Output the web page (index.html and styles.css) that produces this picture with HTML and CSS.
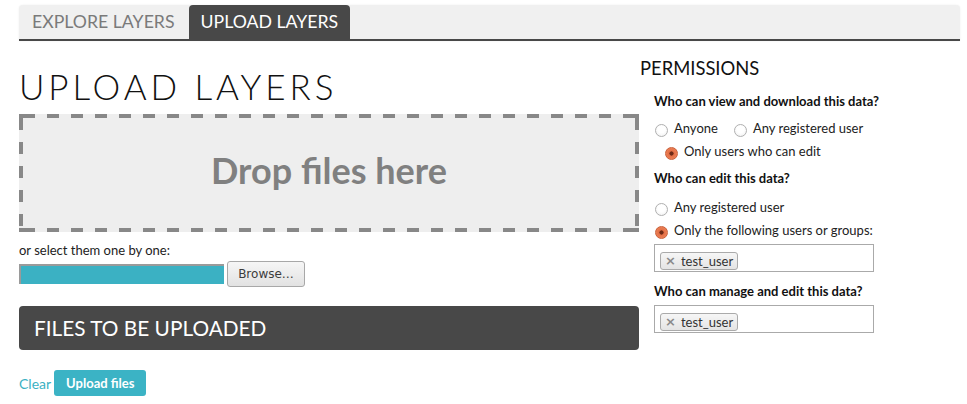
FILE: index.html
```html
<!DOCTYPE html>
<html lang="en">
<head>
<meta charset="utf-8">
<title>Upload Layers</title>
<link rel="stylesheet" href="styles.css">
</head>
<body>
<div class="page">
  <nav class="tabs">
    <a class="tab">Explore Layers</a>
    <a class="tab active">Upload Layers</a>
  </nav>
  <div class="main">
    <section class="left">
      <h1 class="title">Upload Layers</h1>
      <div class="drop">Drop files here</div>
      <p class="hint">or select them one by one:</p>
      <div class="file-row">
        <span class="file-field"></span>
        <button class="browse">Browse…</button>
      </div>
      <div class="files-bar">Files to be uploaded</div>
      <div class="actions">
        <a class="clear">Clear</a>
        <button class="upload">Upload files</button>
      </div>
    </section>
    <aside class="right">
      <h2 class="perm-title">Permissions</h2>
      <div class="perm">
        <h3 class="q q-first">Who can view and download this data?</h3>
        <div class="row row-a">
          <label class="opt"><span class="radio"></span>Anyone</label>
          <label class="opt opt-gap"><span class="radio"></span>Any registered user</label>
        </div>
        <div class="row row-b indent">
          <label class="opt"><span class="radio on"></span>Only users who can edit</label>
        </div>
        <h3 class="q q-mid">Who can edit this data?</h3>
        <div class="row row-c">
          <label class="opt"><span class="radio"></span>Any registered user</label>
        </div>
        <div class="row row-b">
          <label class="opt"><span class="radio on"></span>Only the following users or groups:</label>
        </div>
        <div class="tagbox box-1"><span class="chip"><span class="x">×</span>test_user</span></div>
        <h3 class="q q-last">Who can manage and edit this data?</h3>
        <div class="tagbox box-2"><span class="chip"><span class="x">×</span>test_user</span></div>
      </div>
    </aside>
  </div>
</div>
</body>
</html>
```
FILE: styles.css
```css
* { box-sizing: border-box; }
html, body { margin: 0; padding: 0; background: #fff; }
body { font-family: Lato, "Open Sans", sans-serif; color: #222; }
.page { padding: 5px 7px 0 19px; }

.tabs {
  display: flex;
  height: 36px;
  background: #f0f0f0;
  border-bottom: 2px solid #484848;
  border-radius: 4px 4px 0 0;
  box-shadow: 0 0 2px rgba(0,0,0,0.08);
}
.tab {
  height: 34px;
  line-height: 34px;
  padding: 0 14px 0 13px;
  font-size: 17.7px;
  text-transform: uppercase;
  color: #7a7a7a;
  border-radius: 4px 4px 0 0;
}
.tab.active { background: #484848; color: #fff; padding: 0 12px; }

.main { display: grid; grid-template-columns: 620px 1fr; }

.title {
  margin: 25px 0 8px 0;
  font-size: 35px;
  line-height: 40px;
  font-weight: 300;
  letter-spacing: 3.9px;
  text-transform: uppercase;
  color: #111;
}
.drop {
  height: 118px;
  background-color: #eeeeee;
  background-image:
    linear-gradient(#888, #888), linear-gradient(#888, #888),
    linear-gradient(#888, #888), linear-gradient(#888, #888),
    repeating-linear-gradient(90deg, transparent 0 4px, #888 4px 16px, transparent 16px 24px),
    repeating-linear-gradient(90deg, transparent 0 4px, #888 4px 16px, transparent 16px 24px),
    repeating-linear-gradient(180deg, transparent 0 4px, #888 4px 16px, transparent 16px 24px),
    repeating-linear-gradient(180deg, transparent 0 4px, #888 4px 16px, transparent 16px 24px);
  background-size:
    4px 4px, 4px 4px, 4px 4px, 4px 4px,
    100% 4px, 100% 4px, 4px 100%, 4px 100%;
  background-position:
    left top, right top, left bottom, right bottom,
    left top, left bottom, left top, right top;
  background-repeat: no-repeat;
  display: flex;
  align-items: center;
  justify-content: center;
  padding-bottom: 6px;
  font-size: 36px;
  font-weight: 700;
  color: #808080;
}
.hint { margin: 10px 0 0 0; font-size: 13px; line-height: 16px; color: #222; }
.file-row { display: flex; align-items: center; gap: 3px; margin-top: 3px; height: 26px; }
.file-field {
  width: 205px;
  height: 20px;
  background: #3bb1c3;
  border-top: 2px solid #9a9a9a;
  border-left: 2px solid #9a9a9a;
}
.browse {
  width: 78px;
  height: 26px;
  border: 1px solid #a8a8a8;
  border-radius: 3px;
  background: linear-gradient(#f6f6f6, #e2e2e2);
  font-family: "DejaVu Sans", sans-serif;
  font-size: 12px;
  color: #3c3c3c;
  padding: 0;
}
.files-bar {
  margin-top: 19px;
  height: 44px;
  line-height: 44px;
  background: #484848;
  border-radius: 4px;
  color: #fff;
  font-size: 20.8px;
  text-transform: uppercase;
  padding-left: 15px;
}
.actions { display: flex; align-items: center; gap: 3px; margin-top: 20px; }
.clear { font-size: 14px; color: #3bb1c3; }
.upload {
  height: 26px;
  padding: 0 12px;
  background: #3bb3c5;
  color: #fff;
  border: none;
  border-radius: 3px;
  font-family: Lato, sans-serif;
  font-weight: 700;
  font-size: 13px;
}

.perm-title {
  margin: 16px 0 0 1px;
  font-size: 18.4px;
  line-height: 22px;
  font-weight: 400;
  text-transform: uppercase;
  color: #111;
}
.perm { padding-left: 15px; }
.q { margin: 0; font-size: 13px; line-height: 16px; font-weight: 700; color: #111; }
.q-first { margin-top: 14px; }
.q-mid { margin-top: 11px; }
.q-last { margin-top: 11px; }
.row { display: flex; height: 16px; font-size: 13px; line-height: 16px; }
.row-a { margin-top: 11px; }
.row-b { margin-top: 7px; }
.row-c { margin-top: 13px; }
.indent { padding-left: 10px; }
.opt { display: flex; align-items: center; color: #222; }
.opt-gap { margin-left: 15px; }
.radio {
  width: 13px;
  height: 13px;
  margin: 4px 6px 0 1px;
  border-radius: 50%;
  border: 1px solid #b0b0b0;
  background: radial-gradient(circle at 50% 40%, #ffffff 40%, #ededed 100%);
  flex: none;
}
.radio.on {
  border-color: #c9603a;
  background: radial-gradient(circle, #6e2a16 0 1.8px, #e46f45 2.4px, #ef8a60 100%);
}
.tagbox {
  width: 220px;
  height: 28px;
  border: 1px solid #aaa;
  background: #fff;
  padding: 4px 5px;
}
.box-1 { margin-top: 6px; }
.box-2 { margin-top: 6px; }
.chip {
  display: inline-flex;
  align-items: center;
  height: 18px;
  padding: 0 4px 0 4px;
  border: 1px solid #aaa;
  border-radius: 3px;
  background: linear-gradient(#f6f6f6, #e4e4e4);
  font-size: 13px;
  color: #333;
}
.x { font-family: "DejaVu Sans", sans-serif; font-size: 13px; font-weight: 700; color: #8a8a8a; margin-right: 5px; line-height: 1; }
```
